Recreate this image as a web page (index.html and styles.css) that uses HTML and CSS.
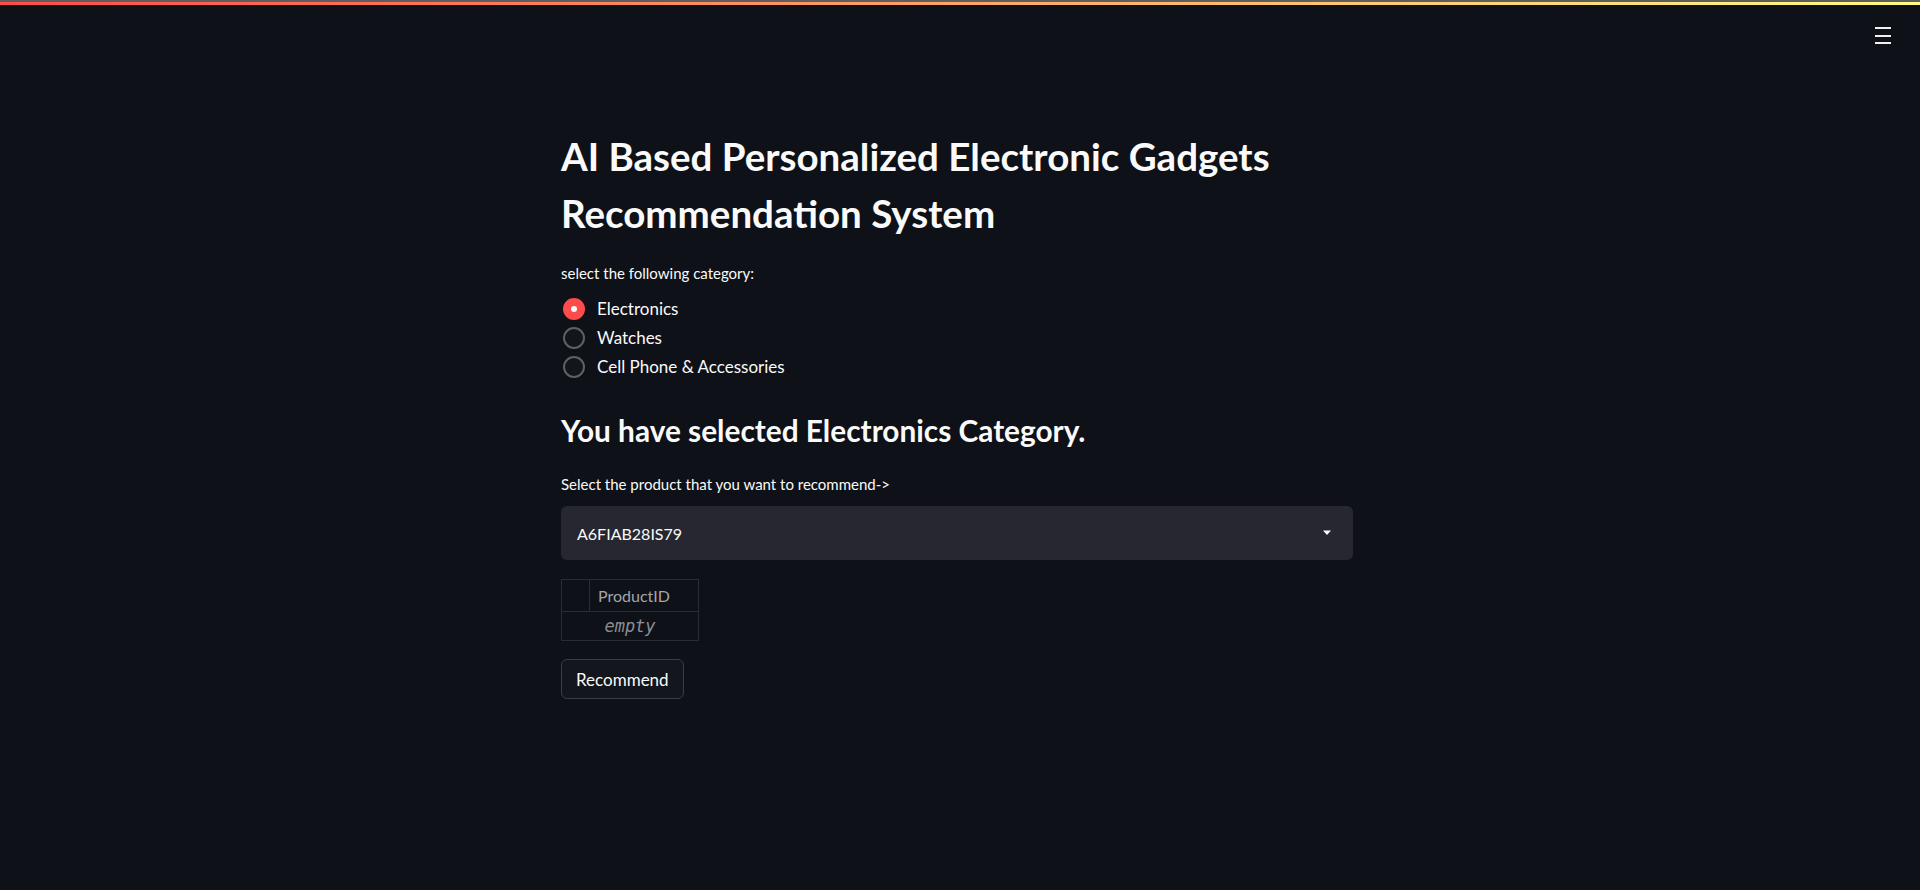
FILE: index.html
```html
<!DOCTYPE html>
<html lang="en">
<head>
<meta charset="utf-8">
<title>AI Based Personalized Electronic Gadgets Recommendation System</title>
<link rel="stylesheet" href="styles.css">
</head>
<body>
<div class="chrome-line"></div>
<div class="decoration"></div>
<button class="menu-btn" aria-label="Main menu">
  <span></span><span></span><span></span>
</button>
<main class="block">
  <h1 class="title">AI Based Personalized Electronic Gadgets Recommendation System</h1>
  <div class="label">select the following category:</div>
  <div class="radio-group">
    <label class="radio checked"><span class="dot"></span><span class="rtext">Electronics</span></label>
    <label class="radio"><span class="dot"></span><span class="rtext">Watches</span></label>
    <label class="radio"><span class="dot"></span><span class="rtext">Cell Phone &amp; Accessories</span></label>
  </div>
  <h3 class="subtitle">You have selected Electronics Category.</h3>
  <div class="label label2">Select the product that you want to recommend-&gt;</div>
  <div class="select">
    <span class="select-value">A6FIAB28IS79</span>
    <svg class="caret" width="10" height="6" viewBox="0 0 10 6"><path d="M1 0.5 L9 0.5 L5 5 Z" fill="#fafafa"/></svg>
  </div>
  <table class="df">
    <thead><tr><th class="idx"></th><th class="col">ProductID</th></tr></thead>
    <tbody><tr><td colspan="2" class="empty">empty</td></tr></tbody>
  </table>
  <button class="btn">Recommend</button>
</main>
</body>
</html>
```
FILE: styles.css
```css
html, body {
  margin: 0;
  padding: 0;
  background: #0e1117;
  color: #fafafa;
  font-family: "Source Sans Pro", Lato, "Noto Sans", sans-serif;
  height: 100%;
  overflow: hidden;
}
.chrome-line {
  height: 2px;
  background: #5e5e5e;
}
.decoration {
  height: 3px;
  background: linear-gradient(90deg, #ff4b4b, #fffd80);
}
.menu-btn {
  position: absolute;
  top: 27px;
  right: 29px;
  width: 16px;
  height: 17px;
  padding: 0;
  border: 0;
  background: transparent;
  display: flex;
  flex-direction: column;
  justify-content: space-between;
}
.menu-btn span {
  display: block;
  height: 2px;
  width: 16px;
  background: #f0f0f0;
}
.block {
  width: 792px;
  margin-left: calc(50% - 399px);
  padding-top: 123px;
}
.title {
  margin: 0;
  font-size: 38.5px;
  line-height: 57px;
  font-weight: 700;
  width: 780px;
}
.label {
  margin-top: 21px;
  font-size: 15px;
  line-height: 20px;
}
.radio-group {
  margin-top: 11px;
  display: flex;
  flex-direction: column;
}
.radio {
  display: flex;
  align-items: center;
  height: 29px;
  font-size: 17px;
  padding-left: 2px;
}
.dot {
  box-sizing: border-box;
  width: 22px;
  height: 22px;
  border-radius: 50%;
  border: 2px solid #5f6066;
  background: #12151c;
  margin-right: 12px;
  flex: none;
}
.radio.checked .dot {
  border: 8px solid #ff4b4b;
  background: #fafafa;
}
.subtitle {
  margin: 30px 0 0;
  font-size: 29.8px;
  line-height: 40px;
  font-weight: 700;
}
.label2 {
  margin-top: 23px;
}
.select {
  margin-top: 12px;
  height: 54px;
  background: #262730;
  border-radius: 6px;
  display: flex;
  align-items: center;
  justify-content: space-between;
  padding: 0 21px 0 16px;
  font-size: 16px;
}
.caret {
  display: block;
}
.df {
  margin-top: 19px;
  border-collapse: collapse;
  font-size: 16px;
}
.df th, .df td {
  border: 1px solid #2a2c33;
  padding: 0;
}
.df th {
  height: 31px;
  font-weight: 400;
  color: #a4a5aa;
  text-align: left;
}
.df .idx {
  width: 27px;
}
.df .col {
  width: 100px;
  padding-left: 8px;
}
.df .empty {
  height: 28px;
  text-align: center;
  font-family: "DejaVu Sans Mono", "Liberation Mono", monospace;
  font-style: italic;
  font-size: 17px;
  color: #8d8e93;
}
.btn {
  display: block;
  margin-top: 18px;
  height: 40px;
  padding: 0 14px;
  background: #13161d;
  color: #fafafa;
  border: 1px solid #3b3d44;
  border-radius: 6px;
  font-family: inherit;
  font-size: 17px;
}
```
